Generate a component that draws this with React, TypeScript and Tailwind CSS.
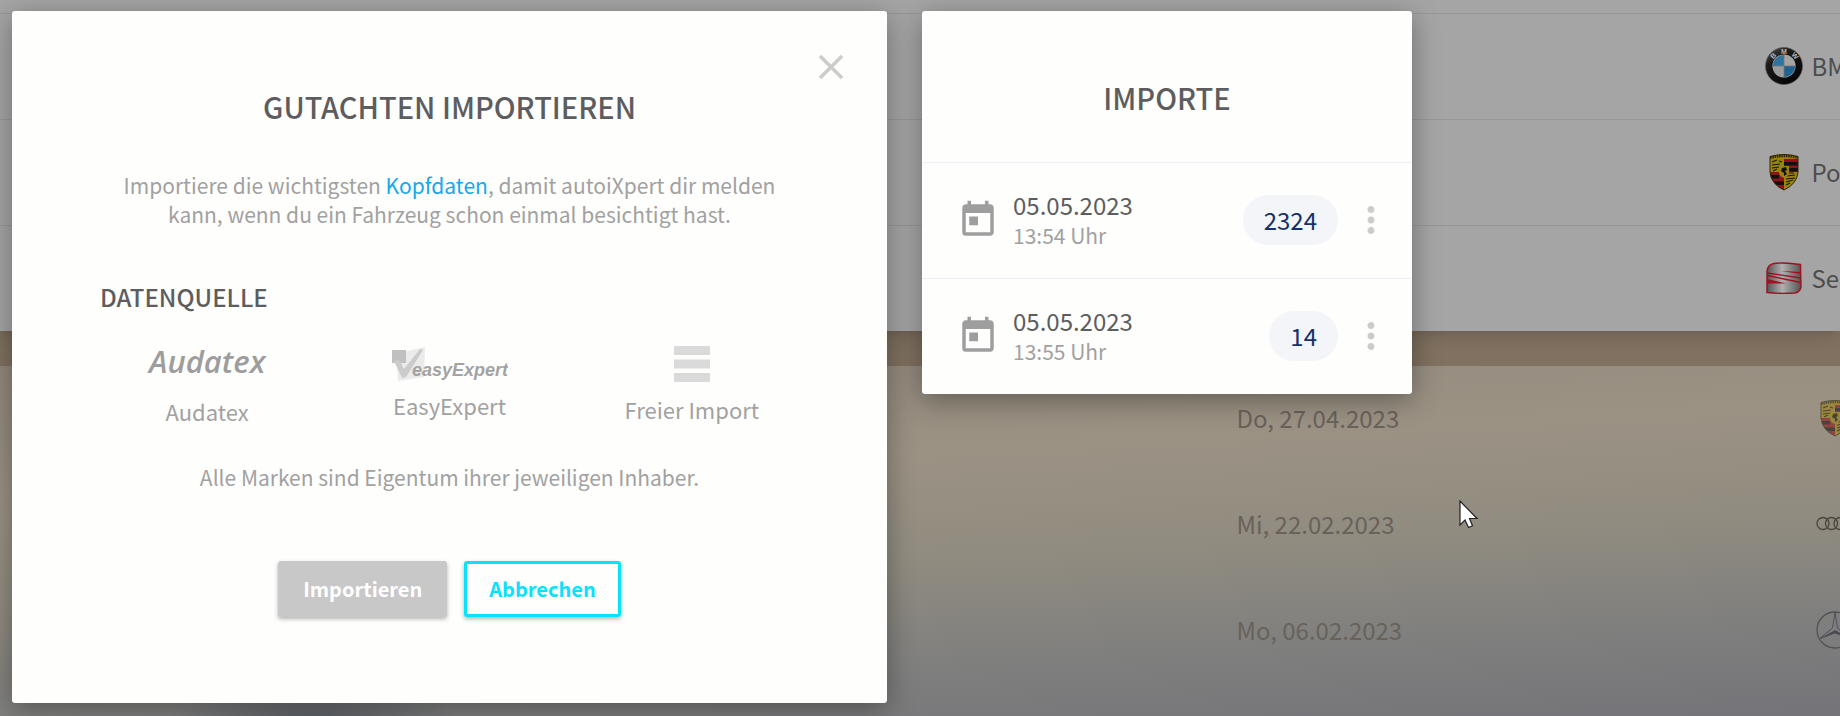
import React, { useState } from 'react'
import { MdClose, MdMoreVert, MdToday } from 'react-icons/md'

const reports = [
  { make: 'BMW', logo: <BmwLogo /> },
  { make: 'Porsche', logo: <PorscheLogo /> },
  { make: 'Seat', logo: <SeatLogo /> },
]

const olderReports = [
  { date: 'Do, 27.04.2023', logo: <PorscheLogo faded /> },
  { date: 'Mi, 22.02.2023', logo: <AudiLogo /> },
  { date: 'Mo, 06.02.2023', logo: <MercedesLogo /> },
]

const imports = [
  { date: '05.05.2023', time: '13:54 Uhr', count: 2324 },
  { date: '05.05.2023', time: '13:55 Uhr', count: 14 },
]

const sources = [
  { name: 'Audatex', logo: <AudatexLogo /> },
  { name: 'EasyExpert', logo: <EasyExpertLogo /> },
  { name: 'Freier Import', logo: <FreeImportIcon /> },
]

function BmwLogo() {
  return (
    <svg viewBox="0 0 38 38" className="h-[38px] w-[38px] shrink-0" role="img" aria-label="BMW">
      <defs>
        <linearGradient id="bmwRing" x1="0" y1="0" x2="0.7" y2="1">
          <stop offset="0" stopColor="#555" />
          <stop offset="0.35" stopColor="#1b1b1b" />
          <stop offset="1" stopColor="#050505" />
        </linearGradient>
      </defs>
      <circle cx="19" cy="19" r="18.5" fill="url(#bmwRing)" stroke="#555" strokeWidth="0.7" />
      <circle cx="19" cy="19" r="11.6" fill="#9b9b9b" />
      <path d="M19 19V8A11 11 0 0 0 8 19z" fill="#2f749f" />
      <path d="M19 19v11a11 11 0 0 0 11-11z" fill="#1f628f" />
      <path d="M19 19h11A11 11 0 0 0 19 8z" fill="#a5a5a5" />
      <path d="M19 19H8a11 11 0 0 0 11 11z" fill="#9c9c9c" />
      <path d="M19 7.500v23M7.500 19h23" stroke="#777" strokeWidth="0.8" />
      <g fill="#b5b5b5" fontFamily="Liberation Sans, sans-serif" fontWeight="700" fontSize="7" textAnchor="middle">
        <text x="19" y="6.500">M</text>
        <text x="19" y="6.500" transform="rotate(-47 19 19)">B</text>
        <text x="19" y="6.500" transform="rotate(47 19 19)">W</text>
      </g>
    </svg>
  )
}

function PorscheLogo({ faded = false }: { faded?: boolean }) {
  return (
    <svg
      viewBox="0 0 38 38"
      className={faded ? 'h-[38px] w-[38px] shrink-0 opacity-60' : 'h-[38px] w-[38px] shrink-0'}
      role="img"
      aria-label="Porsche"
    >
      <defs>
        <clipPath id="porscheShield">
          <path d="M5 3.500Q19-.5 33 3.500V19Q32 31 19 37 6 31 5 19z" />
        </clipPath>
      </defs>
      <g clipPath="url(#porscheShield)">
        <path d="M0 0h38v38H0z" fill="#9c8210" />
        <path d="M19 6h14v13H19zM5 19h14v18H5z" fill="#8f1218" />
        <path d="M19 9h14v3.500H19zM24 15h9v3.500h-9zM5 22h9v3.500H5zM5 28.500h14V32H5z" fill="#111" />
        <path
          d="M7 9l5-2M7 12l8-1M7 15l7-1M8 18l4-2M14 8l3 1M22 23l8-1M21 26l9-1M21 29l7-2M21 32l4-2M22 20l7 0"
          stroke="#1a1708"
          strokeWidth="1.200"
          fill="none"
        />
        <path d="M5 4.500Q19 1 33 4.500" stroke="#2c260a" strokeWidth="3" strokeDasharray="1.500 .8" fill="none" />
        <path d="M14 13h10v7q-1 4-5 5-4-1-5-5z" fill="#9c8210" />
        <path d="M17 15l4-1 1 3-2 1 2 3-3 2v-3l-3-2z" fill="#111" />
      </g>
      <path d="M5 3.500Q19-.5 33 3.500V19Q32 31 19 37 6 31 5 19z" fill="none" stroke="#2c260a" />
    </svg>
  )
}

function SeatLogo() {
  return (
    <svg viewBox="0 0 38 38" className="h-[38px] w-[38px] shrink-0" role="img" aria-label="Seat">
      <defs>
        <linearGradient id="seatChrome">
          <stop offset="0" stopColor="#555" />
          <stop offset="0.45" stopColor="#b0b0b0" />
          <stop offset="1" stopColor="#555" />
        </linearGradient>
      </defs>
      <path
        d="M9 4.500Q20 3 35.500 5.500L36 28Q35 33 30 34 15 35 2 33.500V12Q3 5.500 9 4.500z"
        fill="url(#seatChrome)"
        stroke="#a10f22"
        strokeWidth="1.400"
      />
      <path d="M2 14l34 5M2 16.500l34 7" fill="none" stroke="#a10f22" strokeWidth="1.300" />
      <path d="M2 20l19 4.500L2 24.500zM16 12l20 1v2z" fill="#a10f22" />
    </svg>
  )
}

function AudiLogo() {
  return (
    <svg viewBox="0 0 40 38" className="h-[38px] w-10 shrink-0" role="img" aria-label="Audi">
      <g fill="none" stroke="#4a463e" strokeWidth="1.300">
        <circle cx="7" cy="18.500" r="6" />
        <circle cx="15.500" cy="18.500" r="6" />
        <circle cx="24" cy="18.500" r="6" />
        <circle cx="32.500" cy="18.500" r="6" />
      </g>
    </svg>
  )
}

function MercedesLogo() {
  return (
    <svg viewBox="0 0 38 38" className="h-[38px] w-[38px] shrink-0" role="img" aria-label="Mercedes-Benz">
      <circle cx="19" cy="19" r="18" fill="none" stroke="#505255" strokeWidth="1.300" />
      <path d="M19 1.500l2.500 15.500L34 27.500 19 22 4 27.500 16.500 17z" fill="#7d7f82" stroke="#4a4c50" strokeWidth="0.900" />
      <path d="M19 1.500V19l15 8.500L19 22 4 27.500 19 19z" fill="#4a4c50" />
    </svg>
  )
}

function AudatexLogo() {
  return (
    <span className="mb-2 flex h-[38px] items-center font-['Open_Sans','Noto_Sans',sans-serif] text-[31px] leading-8 font-semibold text-[#9d9d9d] italic">
      Audatex
    </span>
  )
}

function EasyExpertLogo() {
  return (
    <svg viewBox="0 0 118 36" className="mt-1 h-9 w-[118px]" role="img" aria-label="easyExpert">
      <path d="M17 5L35 1l-1 30-26 4-1-16z" fill="#ebebeb" />
      <path d="M2 4h14v13H2z" fill="#c0c0c0" />
      <path d="M4 15l5-2 5 10L30 3l3 1-17 27-4 1z" fill="#cbcbcb" />
      <text
        x="22"
        y="30"
        fill="#a3a3a3"
        fontFamily="Liberation Sans, sans-serif"
        fontSize="18"
        fontStyle="italic"
        fontWeight="700"
      >
        easyExpert
      </text>
    </svg>
  )
}

function FreeImportIcon() {
  return (
    <svg viewBox="0 0 36 36" className="my-1 h-9 w-9" aria-hidden="true">
      <path d="M0 0h36v9H0zM0 13.500h36v9H0zM0 27h36v9H0z" fill="#dadada" />
    </svg>
  )
}

function ReportList() {
  return (
    <div className="overflow-hidden bg-[#807160] text-2xl leading-8">
      <ul className="bg-[#a5a5a5] pt-[13px] text-[#4d4d4d] shadow-lg">
        {reports.map((report) => (
          <li
            key={report.make}
            className="flex h-[106px] items-center gap-[9px] border-t border-[#969799] pb-0.5 pl-[95.9%] whitespace-nowrap"
          >
            {report.logo}
            {report.make}
          </li>
        ))}
      </ul>
      <ul className="mt-[35px] bg-[radial-gradient(ellipse_8%_10%_at_17%_101%,#5a5e64,transparent),linear-gradient(177deg,#92877b,#9b9284_30%,#918c80_54%,#7f7f7e_78%,#747479)] pb-8 text-[#68625b]">
        {olderReports.map((report) => (
          <li key={report.date} className="grid h-[106px] grid-cols-[67.2%_31.5%_auto] items-center pb-0.5">
            <span className="col-start-2">{report.date}</span>
            {report.logo}
          </li>
        ))}
      </ul>
    </div>
  )
}

function ImportDialog() {
  const [source, setSource] = useState('')

  return (
    <section
      role="dialog"
      aria-labelledby="import-title"
      className="w-[875px] rounded-[3px] bg-[#fefefd] px-22 pb-[86px] text-center shadow-[0_6px_28px_rgba(0,0,0,0.35)]"
    >
      <div className="-mr-[53px] flex justify-end pt-[35px]">
        <button type="button" aria-label="Schließen" className="text-[#cccccc]">
          <MdClose size={42} />
        </button>
      </div>
      <h1 id="import-title" className="text-[29px] leading-9 font-medium text-[#5d5d5f]">
        GUTACHTEN IMPORTIEREN
      </h1>
      <p className="mt-[47px] text-[21px] leading-[29px] text-[#a1a1a1]">
        Importiere die wichtigsten{' '}
        <a href="#kopfdaten" className="text-[#16a8ea]">
          Kopfdaten
        </a>
        , damit autoiXpert dir melden
        <br />
        kann, wenn du ein Fahrzeug schon einmal besichtigt hast.
      </p>
      <h2 className="mt-[52px] text-left text-2xl leading-8 font-medium text-[#5d5d5f]">DATENQUELLE</h2>
      <div className="-mx-[14px] mt-[29px] grid grid-cols-3 text-[22px] leading-8 text-[#a1a1a1]">
        {sources.map((item) => (
          <button
            key={item.name}
            type="button"
            aria-pressed={source === item.name}
            onClick={() => setSource(item.name)}
            className="flex flex-col items-center justify-start gap-[7px]"
          >
            {item.logo}
            {item.name}
          </button>
        ))}
      </div>
      <p className="mt-[34px] text-[21px] leading-8 text-[#a1a1a1]">
        Alle Marken sind Eigentum ihrer jeweiligen Inhaber.
      </p>
      <div className="mt-[68px] flex justify-center gap-[17px] text-xl leading-8 font-bold">
        <button
          type="button"
          disabled={!source}
          className="h-14 rounded-[3px] bg-[#c8c8c8] px-[25px] text-white shadow-[0_2px_4px_rgba(0,0,0,0.3)]"
        >
          Importieren
        </button>
        <button
          type="button"
          className="h-14 rounded-[3px] border-3 border-[#0be0ff] px-[22px] text-[#0be0ff] shadow-[0_2px_4px_rgba(0,0,0,0.3)]"
        >
          Abbrechen
        </button>
      </div>
    </section>
  )
}

function ImportHistory() {
  return (
    <section className="w-[490px] rounded-[3px] bg-[#fefefd] shadow-[0_6px_28px_rgba(0,0,0,0.35)]">
      <h2 className="pt-[66px] pb-[45px] text-center text-[29px] leading-10 font-medium text-[#5d5d5f]">IMPORTE</h2>
      <ul>
        {imports.map((item) => (
          <li key={item.time} className="flex h-[116px] items-center border-t border-[#eeeff4] pr-5 pb-0.5 pl-[35px]">
            <MdToday size={42} className="shrink-0 text-[#9e9e9e]" />
            <div className="ml-[14px] flex-1">
              <p className="text-2xl leading-8 text-[#5d5d5f]">{item.date}</p>
              <p className="text-[21px] leading-[29px] text-[#a1a1a1]">{item.time}</p>
            </div>
            <span className="rounded-full bg-[#f3f5f9] px-[21px] py-[9px] text-2xl leading-8 text-[#14316a]">
              {item.count}
            </span>
            <button type="button" aria-label="Mehr" className="ml-[12px] text-[#cccccc]">
              <MdMoreVert size={42} />
            </button>
          </li>
        ))}
      </ul>
    </section>
  )
}

function Cursor() {
  return (
    <svg viewBox="0 0 20 29" className="absolute top-[500px] left-[1459px] z-20 h-[29px] w-5" aria-hidden="true">
      <path d="M1 1v24l5-5 3.500 7.500 4-1.800L10.500 18.500H18z" fill="#fff" stroke="#222" strokeWidth="1.200" />
    </svg>
  )
}

function App() {
  return (
    <main className="relative grid min-h-screen grid-cols-1 overflow-hidden font-['Noto_Sans_CJK_SC',sans-serif]">
      <div className="col-start-1 row-start-1 grid">
        <ReportList />
      </div>
      <div className="z-10 col-start-1 row-start-1 flex items-start gap-[35px] px-3 py-[11px]">
        <ImportDialog />
        <ImportHistory />
      </div>
      <Cursor />
    </main>
  )
}

export default App
